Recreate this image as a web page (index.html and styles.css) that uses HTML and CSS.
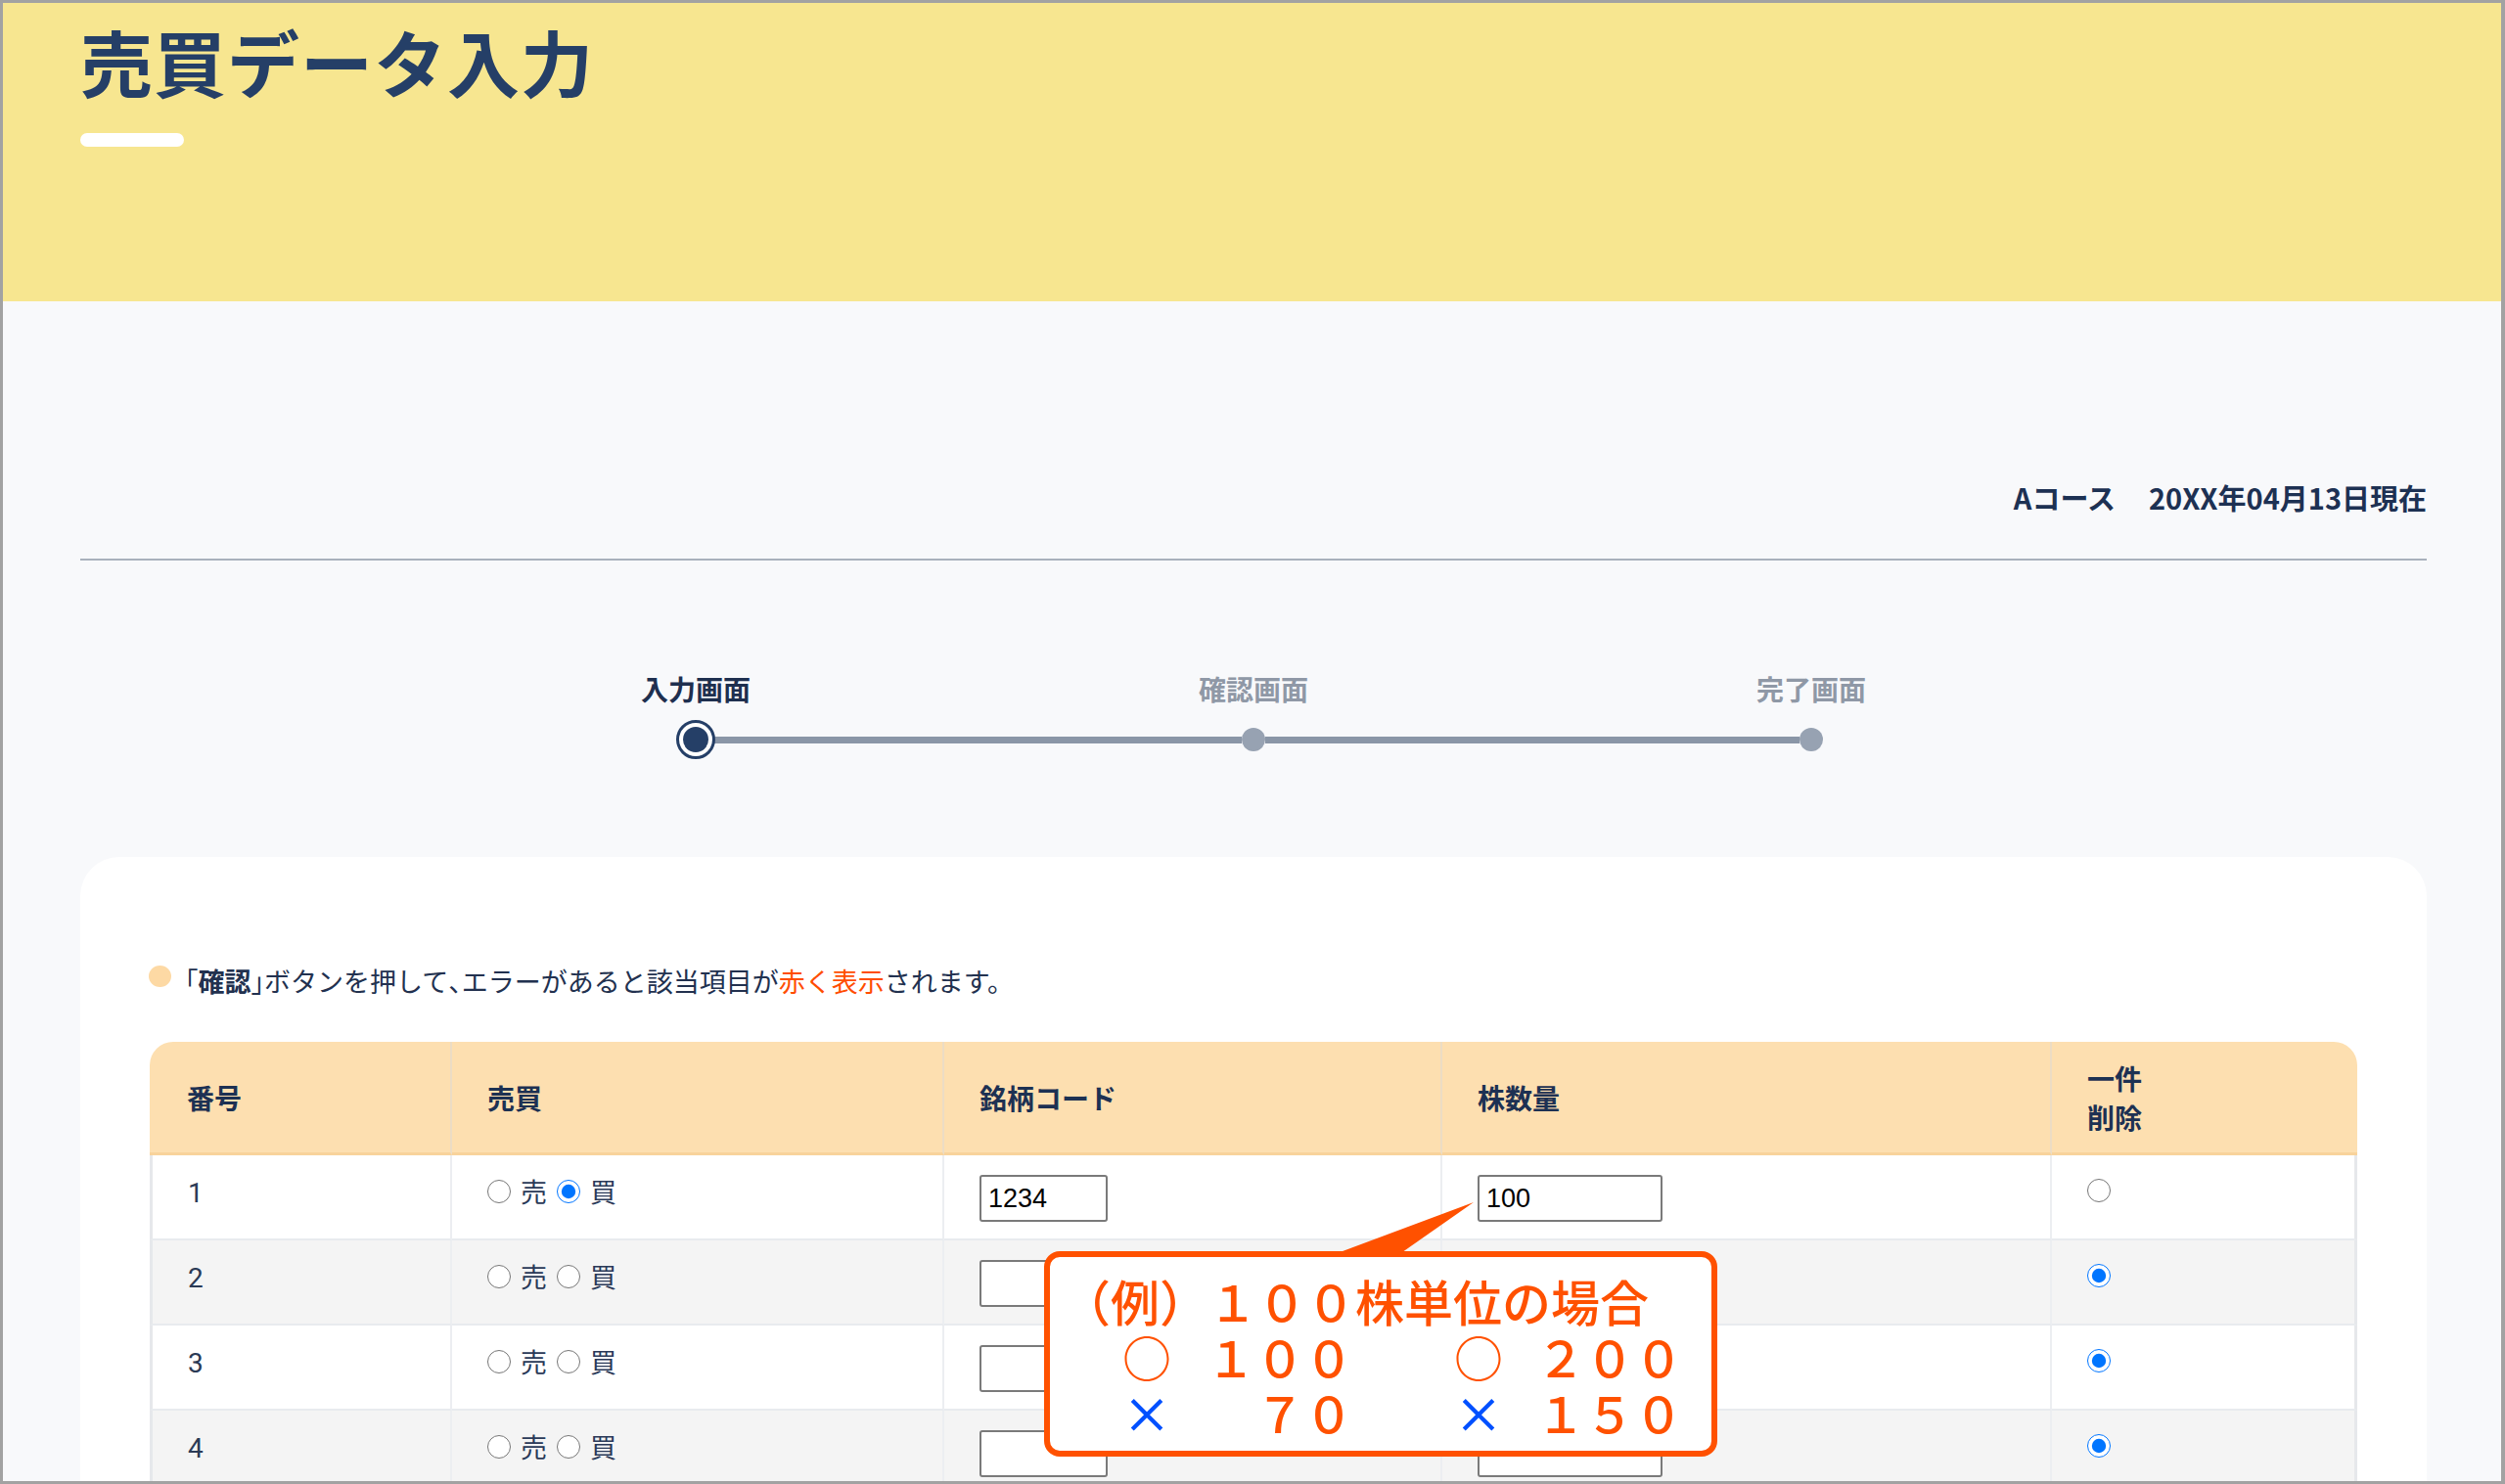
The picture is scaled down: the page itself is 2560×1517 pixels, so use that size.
FILE: index.html
```html
<!DOCTYPE html>
<html lang="ja">
<head>
<meta charset="utf-8">
<title>売買データ入力</title>
<link rel="stylesheet" href="styles.css">
</head>
<body>
<div class="frame">
  <header class="hero">
    <h1 class="title">売買データ入力</h1>
    <div class="title-bar"></div>
  </header>
  <main class="main">
    <div class="meta"><span>Aコース</span><span>20XX年04月13日現在</span></div>
    <hr class="rule">
    <div class="stepper">
      <div class="step-labels">
        <span class="step-label is-active">入力画面</span>
        <span class="step-label">確認画面</span>
        <span class="step-label">完了画面</span>
      </div>
      <div class="step-track">
        <span class="dot dot-active"></span><span class="seg"></span><span class="dot"></span><span class="seg"></span><span class="dot"></span>
      </div>
    </div>
    <section class="card">
      <p class="notice"><span class="bullet"></span><span><span class="half">「</span><b>確認</b><span class="half">」</span>ボタンを押して<span class="half">、</span>エラーがあると該当項目が<span class="red">赤く表示</span>されます。</span></p>
      <div class="table-wrap">
        <table class="trade">
          <colgroup>
            <col class="c-no"><col class="c-side"><col class="c-code"><col class="c-qty"><col class="c-del">
          </colgroup>
          <thead>
            <tr><th>番号</th><th>売買</th><th>銘柄コード</th><th>株数量</th><th>一件<br>削除</th></tr>
          </thead>
          <tbody>
            <tr>
              <td class="num">1</td>
              <td><label class="opt"><input type="radio" name="s1">売</label><label class="opt"><input type="radio" name="s1" checked>買</label></td>
              <td><input class="code" type="text" value="1234"></td>
              <td><input class="qty" type="text" value="100"></td>
              <td><input class="del" type="radio" name="d1"></td>
            </tr>
            <tr>
              <td class="num">2</td>
              <td><label class="opt"><input type="radio" name="s2">売</label><label class="opt"><input type="radio" name="s2">買</label></td>
              <td><input class="code" type="text"></td>
              <td><input class="qty" type="text"></td>
              <td><input class="del" type="radio" name="d2" checked></td>
            </tr>
            <tr>
              <td class="num">3</td>
              <td><label class="opt"><input type="radio" name="s3">売</label><label class="opt"><input type="radio" name="s3">買</label></td>
              <td><input class="code" type="text"></td>
              <td><input class="qty" type="text"></td>
              <td><input class="del" type="radio" name="d3" checked></td>
            </tr>
            <tr>
              <td class="num">4</td>
              <td><label class="opt"><input type="radio" name="s4">売</label><label class="opt"><input type="radio" name="s4">買</label></td>
              <td><input class="code" type="text"></td>
              <td><input class="qty" type="text"></td>
              <td><input class="del" type="radio" name="d4" checked></td>
            </tr>
          </tbody>
        </table>
        <div class="callout">
          <svg class="callout-tail" width="170" height="64" viewBox="0 0 170 64"><polygon points="10,62 80,62 160,6" fill="#ff5100"/></svg>
          <div class="c-line">（例）１００株単位の場合</div>
          <div class="c-line"><span class="cell g-mark">○</span><span class="digits g-a">１００</span><span class="cell g-b">○</span><span class="digits g-c">２００</span></div>
          <div class="c-line"><span class="cell g-mark x">×</span><span class="digits g-d">７０</span><span class="cell g-e x">×</span><span class="digits g-c">１５０</span></div>
        </div>
      </div>
    </section>
  </main>
</div>
</body>
</html>
```

FILE: styles.css
```css
html, body {
  margin: 0;
  padding: 0;
}
body {
  font-family: "Noto Sans CJK JP", "Noto Sans", sans-serif;
  color: #1f3152;
}
.frame {
  height: 100vh;
  box-sizing: border-box;
  border: 3px solid #a2a2a2;
  border-right-width: 4px;
  overflow: hidden;
  background: #f8f9fb;
}
.hero {
  height: 305px;
  box-sizing: border-box;
  background: #f7e690;
  padding: 22px 0 0 79px;
}
.title {
  margin: 0;
  font-size: 74px;
  line-height: 74px;
  font-weight: 700;
  color: #253f67;
  letter-spacing: 1px;
}
.title-bar {
  margin-top: 37px;
  width: 106px;
  height: 14px;
  border-radius: 7px;
  background: #ffffff;
}
.main {
  padding: 0 76px 0 79px;
}
.meta {
  margin-top: 180px;
  display: flex;
  justify-content: flex-end;
  gap: 34px;
  font-size: 29px;
  line-height: 40px;
  font-weight: 700;
  color: #1d3153;
}
.rule {
  margin: 43px 0 0;
  border: 0;
  height: 2px;
  background: #a9b1bc;
}
.stepper {
  width: 1340px;
  margin: 113px auto 0;
  display: flex;
  flex-direction: column;
}
.step-labels {
  display: flex;
  justify-content: space-between;
}
.step-label {
  width: 200px;
  text-align: center;
  font-size: 28px;
  line-height: 36px;
  font-weight: 700;
  color: #8f98a6;
}
.step-label.is-active {
  color: #1e2f4f;
}
.step-track {
  margin: 14px 88px 0 88px;
  height: 40px;
  display: flex;
  align-items: center;
}
.seg {
  flex: 1;
  height: 7px;
  background: #8a96a7;
}
.dot {
  width: 24px;
  height: 24px;
  border-radius: 50%;
  background: #97a2b2;
  flex: none;
}
.dot-active {
  position: relative;
  z-index: 1;
  width: 40px;
  height: 40px;
  margin: 0 -8px;
  box-sizing: border-box;
  border: 3px solid #253f67;
  background: #ffffff;
  display: flex;
  align-items: center;
  justify-content: center;
}
.dot-active::after {
  content: "";
  width: 26px;
  height: 26px;
  border-radius: 50%;
  background: #253f67;
}
.card {
  margin-top: 100px;
  background: #ffffff;
  border-radius: 40px 40px 0 0;
  padding: 109px 71px 0;
  height: 800px;
}
.notice {
  margin: 0;
  display: flex;
  align-items: center;
  font-size: 27px;
  line-height: 36px;
  color: #22314f;
}
.notice .half {
  font-feature-settings: "halt";
}
.notice b {
  font-weight: 700;
}
.bullet {
  width: 23px;
  height: 22px;
  border-radius: 50%;
  background: #fdd9a4;
  margin: -10px 14px 0 -1px;
  flex: none;
}
.red {
  color: #ff4d00;
}
.table-wrap {
  margin-top: 44px;
  position: relative;
}
.trade {
  width: 2256px;
  border-collapse: separate;
  border-spacing: 0;
  table-layout: fixed;
}
.c-no { width: 309px; }
.c-side { width: 503px; }
.c-code { width: 509px; }
.c-qty { width: 623px; }
.c-del { width: 312px; }
.trade th {
  background: #fddfb0;
  height: 113px;
  padding: 0 36px;
  text-align: left;
  font-size: 28px;
  line-height: 40px;
  font-weight: 700;
  color: #1d3153;
  border-right: 2px solid #ecdcc4;
  border-bottom: 3px solid #f8d39b;
}
.trade th:first-child {
  border-top-left-radius: 24px;
  padding-left: 38px;
}
.trade th:last-child {
  border-top-right-radius: 24px;
  border-right: 0;
}
.trade td {
  height: 87px;
  box-sizing: border-box;
  padding: 20px 36px 0;
  vertical-align: top;
  font-size: 27px;
  line-height: 30px;
  color: #2a3958;
  border-right: 2px solid #eceef1;
  border-bottom: 2px solid #e8ebee;
}
.trade td:first-child {
  border-left: 3px solid #e6e8eb;
}
.trade td:last-child {
  border-right: 3px solid #e6e8eb;
}
.trade tbody tr:nth-child(even) td {
  background: #f4f4f4;
}
.trade td.num {
  font-family: Roboto, "Liberation Sans", sans-serif;
  font-size: 28px;
  padding-top: 24px;
  padding-left: 36px;
  color: #2b3a55;
}
.opt {
  display: inline-flex;
  align-items: center;
  gap: 10px;
  margin-right: 10px;
  margin-top: 2px;
  vertical-align: top;
}
.opt input,
.del {
  width: 24px;
  height: 24px;
  margin: 4px 0 0;
}
.opt input {
  margin: 0;
}
.code,
.qty {
  height: 48px;
  box-sizing: border-box;
  border: 2px solid #7a7a7a;
  border-radius: 3px;
  padding: 0 7px;
  font-family: "Liberation Sans", Arial, sans-serif;
  font-size: 27px;
  color: #000000;
  background: #ffffff;
}
.code { width: 131px; }
.qty { width: 189px; }
.callout {
  position: absolute;
  left: 914px;
  top: 214px;
  width: 688px;
  height: 210px;
  box-sizing: border-box;
  border: 6px solid #ff5100;
  border-radius: 16px;
  background: #ffffff;
  padding: 16px 0 0 12px;
  color: #ff5100;
  font-size: 50px;
  line-height: 57px;
  font-weight: 500;
  white-space: nowrap;
}
.callout-tail {
  position: absolute;
  left: 273px;
  top: -62px;
}
.c-line {
  display: flex;
  height: 57px;
}
.cell {
  display: inline-block;
  width: 50px;
  text-align: center;
}
.cell.x {
  color: #0050ff;
}
.g-mark { margin-left: 62px; }
.g-a { margin-left: 36px; }
.g-b { margin-left: 103px; }
.g-c { margin-left: 34px; }
.g-d { margin-left: 86px; }
.g-e { margin-left: 103px; }
```
